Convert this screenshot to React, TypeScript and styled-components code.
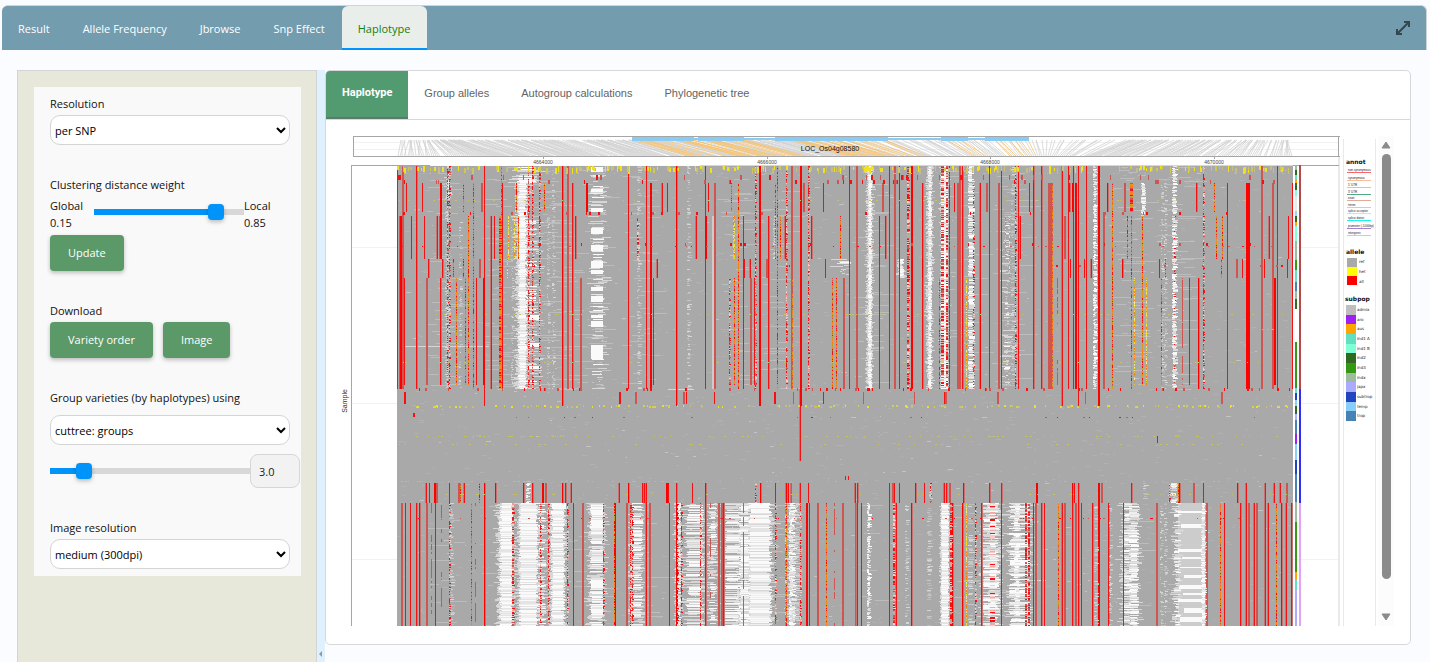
import React, { useMemo, useState } from 'react';
import styled, { createGlobalStyle } from 'styled-components';

const uiFont = '"Open Sans", "Noto Sans", sans-serif';
const plainFont = '"Liberation Sans", Arial, sans-serif';

const GlobalStyle = createGlobalStyle`
  * { box-sizing: border-box; }
  body {
    margin: 0;
    background: #fafcff;
    color: #111;
    font: 11px/16px ${uiFont};
  }
`;

/* ---------- page shell ---------- */

const Page = styled.div`
  display: flex;
  flex-direction: column;
  min-height: 100vh;
  padding: 5px 3px 0 2px;
`;

const TopBar = styled.nav`
  display: flex;
  height: 45px;
  background: #739cae;
  border-top: 1px solid #cfd4d6;
  border-right: 1px solid #cfd4d6;
  border-radius: 6px 6px 0 0;
`;

const TopTab = styled.button<{ $active?: boolean }>`
  padding: 3px 17px 0 16px;
  border: 0;
  border-bottom: 2px solid ${(p) => (p.$active ? '#0093f9' : 'transparent')};
  border-radius: 6px 6px 0 0;
  background: ${(p) => (p.$active ? '#eaeeea' : 'transparent')};
  color: ${(p) => (p.$active ? '#15800f' : '#fff')};
  font: 11px/16px ${uiFont};
  cursor: pointer;
`;

const ExpandButton = styled.button`
  display: flex;
  align-items: center;
  margin-left: auto;
  padding: 0 16px;
  border: 0;
  background: transparent;
  color: #36464f;
`;

const Workspace = styled.div`
  display: flex;
  flex: 1;
  padding: 20px 16px 0 15px;
`;

/* ---------- sidebar ---------- */

const Sidebar = styled.aside`
  width: 300px;
  flex: none;
  padding: 16px 15px 0 16px;
  background: #e7e8da;
  border: 1px solid #d3d5d5;
  border-bottom: 0;
`;

const Settings = styled.form`
  display: flex;
  flex-direction: column;
  gap: 31px;
  padding: 8px 0 7px 16px;
  background: #f9f9f9;
`;

const Field = styled.div<{ $gap?: number }>`
  display: flex;
  flex-direction: column;
  align-items: flex-start;
  gap: ${(p) => p.$gap ?? 3}px;
`;

const Caption = styled.label`
  line-height: 17px;
`;

const Select = styled.select`
  width: 240px;
  height: 30px;
  padding: 0;
  border: 1px solid #d4d4d4;
  border-radius: 10px;
  background: #fff;
  color: #000;
  font: 11px/16px ${uiFont};
`;

const Row = styled.div<{ $gap?: number; $align?: string }>`
  display: flex;
  align-items: ${(p) => p.$align ?? 'center'};
  gap: ${(p) => p.$gap ?? 0}px;
`;

const SideValue = styled.div<{ $width: number }>`
  width: ${(p) => p.$width}px;
  line-height: 17px;
`;

const Slider = styled.input<{ $width: number; $fill: number; $top?: number }>`
  appearance: none;
  width: ${(p) => p.$width}px;
  height: 16px;
  margin: ${(p) => p.$top ?? 0}px 0 0;
  background: linear-gradient(
      to right,
      #0093f9 ${(p) => p.$fill}%,
      #d8d8d8 ${(p) => p.$fill}%
    )
    center / 100% 6px no-repeat;

  &::-webkit-slider-thumb {
    appearance: none;
    width: 16px;
    height: 16px;
    border-radius: 4px;
    background: #0093f9;
    box-shadow: 0 2px 4px rgba(0, 0, 0, 0.25);
  }
`;

const NumberBox = styled.input`
  width: 50px;
  height: 34px;
  padding: 0 8px;
  border: 1px solid #d6d6d6;
  border-radius: 8px;
  background: #f2f2f2;
  color: #222;
  font: 11px/16px ${uiFont};
`;

const ActionButton = styled.button`
  height: 36px;
  padding: 0 18px;
  border: 0;
  border-radius: 4px;
  background: #5b9969;
  color: #fff;
  box-shadow: 0 2px 4px rgba(0, 0, 0, 0.25);
  font: 11px/16px ${uiFont};
  cursor: pointer;
`;

const Splitter = styled.div`
  display: flex;
  align-items: flex-end;
  width: 8px;
  flex: none;
  padding: 0 3px 5px 2px;
  background: #dff0ff;
`;

/* ---------- result panel ---------- */

const ResultPanel = styled.main`
  flex: 1;
  min-width: 0;
  align-self: flex-start;
  margin-bottom: 17px;
  background: #fff;
  border: 1px solid #d6d8da;
  border-radius: 5px;
  overflow: hidden;
`;

const ResultTabs = styled.nav`
  display: flex;
  height: 49px;
  border-bottom: 1px solid #d6d8da;
`;

const ResultTab = styled.button<{ $active?: boolean }>`
  padding: 0 16px 2px;
  border: 0;
  border-bottom: 2px solid ${(p) => (p.$active ? '#5d7a6c' : 'transparent')};
  background: ${(p) => (p.$active ? '#529b71' : 'transparent')};
  color: ${(p) => (p.$active ? '#fff' : '#636363')};
  font: ${(p) =>
    p.$active ? `bold 11px/16px Roboto, ${plainFont}` : `11px/16px ${plainFont}`};
  cursor: pointer;
`;

const PlotArea = styled.div`
  display: flex;
  align-items: stretch;
  padding: 0 16px 18px 0;
`;

const PlotSvg = styled.svg`
  display: block;
  flex: 1;
  min-width: 0;
  height: auto;
`;

const ScrollRail = styled.div`
  display: flex;
  flex-direction: column;
  align-items: center;
  width: 16px;
  margin-top: 16px;
  background: #fcfcfc;
`;

const ScrollThumb = styled.div`
  flex: 1;
  width: 9px;
  border-radius: 5px;
  background: #8b8b8b;
`;

const ScrollButton = styled.button`
  display: flex;
  justify-content: center;
  align-items: center;
  width: 16px;
  height: 18px;
  padding: 0;
  border: 0;
  background: transparent;
`;

const ScrollGap = styled.div`
  height: 29px;
`;

/* ---------- haplotype plot data ---------- */

/* Named sample rows at which haplotype clusters start or end. */
const ROWS: Record<string, number> = {
  a: 166, b: 183, c: 212, d: 216, e: 242, f: 259, g: 278, h: 385,
  i: 389, j: 406, k: 483, l: 503, m: 626, n: 461,
};

/*
 * Each token is column, first row, last row, style and optional width.
 * Styles: r alt, s strong alt, t pale alt, o alt/het mix, y het mix,
 * p alt/missing mix, q broken alt, w missing, v faint missing.
 * Columns are counted in thirds of a pixel from the block origin.
 */
const COLUMN_BLOCKS: { origin: number; tokens: string }[] = [
  {
    origin: 390,
    tokens:
      '22air 28dit 31dis 36ait 43ghr 49bcr 64dfr 80air 97bcr 103dfr 110ght 116fgr 141dfr 148dft 152bfs 152ghr 158fgr ' +
      '168biv 171aip 178aip 189fgo 199gho 211div 220bco 220fgo 225gho 236dho 249bio 259ghr 269fgt 275bct 283ajr 281ghs ' +
      '303dir 313dfr 328dio3 334aio 337bir 352fgy 355dfy 367div 373dfy 380bco 384dfo 415aip 427aip 448aip 462bco 475div ' +
      '490aiv 517ajs1 532ait 548bir 557dfr 571git 588bcs 715air 742dfp 745aiv2 769air 780bis 790ghr 801fgr 816bcr 832bcr 860ajs1 895aiv2 919dfr',
  },
  {
    origin: 690,
    tokens:
      '18dfr 46air 45dfs 55bcr 66dil2 73bit 118ghp 124bco 133dfy 129dfy 133gho 144bio 160dir 163fgr 180fgr 180ght 195aip 194ghr ' +
      '209ajs 228fgt 236dir 252dfv 257bfo 262aio 270dfo 285dfr 289aip 303ait2 306gio 330ajs 339bct 355aip 365dfr 400bcr 406fgr ' +
      '427gio 439gio 451dfo 459git 478air 498ait 568dir 578bct 587dfr 598air 612ait2 628air 652aip2 664ais 698bir 697fgs 748gio ' +
      '793bcr 801bit2 808ait 818air 828giy 838aiw4 851bip 870bir 869gis 888bct 898air 925bit',
  },
  {
    origin: 990,
    tokens:
      '26bit2 34air 45dfy 58dgy 66aiv2 76aip 85air 90dfr 118bcr 131bcs 131air 155air 174bit5 186bio 202ghq 216ajr 223dft 235air ' +
      '239bcr 246bcs 241fgr 250air 256bis 265ajr 283fgr 289air 303fgr 312aiw2 324ajs 339cit2 352bcs1 367bio 397fgs1 404bct 413dfo ' +
      '420bco3 424dio 433ghy 457bdw3 458dho 470ghy 508fgr 515gho 517biv 526fgo 527biv 550aiw3 552dip 577ghq 598ghr 620bcr 625gis1 ' +
      '640aip 673bco 679dfo 698dfo 694fgo 712bir 739fgt 757fgr 768bis2 774bis2 815ait2 823fgr 837dfr 846bit 852ghs2 862air 892fgr 895dfr 907bir',
  },
  {
    origin: 320,
    tokens:
      '318klr 328klr 343kls 350klt 388klr 415klt 420klo 432klr 477klo 493kls1 527kls1 611kls1 623klw2 638klr 666kls 675klt 727kls1 737klr 753klr ' +
      '897klr 925kls1 967klr 972klr 978klr 1040kls 1045klr 1070klr 1117klr 1157kls1 1307klp 1320kls1 1366klr 1398kls 1404klr 1412klt ' +
      '245lmt 256lmr 271lmr 290lmr 298lms1 318lmt 334lmq 346lmr 365lmq 388lmp 394lmv2 455lmo 466lmq 493lms1 578lmp2 660lmp 685lmp 742lmp 760lmr ' +
      '786lmt 850lmp 884lms 884lmo 920lmt2 930lmp 938lmp 978lmr 987lmt 1048lmr 1068lms 1072lmp 1083lmp 1140lmp 1157lmr 1170lmq 1195lmt ' +
      '1205lmt 1211lmr 1270lmq 1366lmp 1398lmr 1398lmo 1412lmw 1430lmv2',
  },
  {
    origin: 780,
    tokens:
      '18klr 25klr 33klr 60inr 60klr 85klr 225klr 233klr 328klr 338klt2 343klr 358klr 406kls1 433klr 452klv 452klp 492klr 500klr 509klt 549kls1 ' +
      '629klr 665klr 769kls 876kls 882klr 896klr 955kls 963klt 1055klr 1092klv3 1168klp 1195klo 1197kls1 1239klt 1270klr 1372kls1 1398klr 1455klr 1482klr 1500klr 1520klt ' +
      '15lmp 32lmw2 50lmv4 60lmp 80lms 88lmr 113lmt 139lmo 163lmq 186lmt 226lmt 231lmr 244lmr 266lmw2 328lmr 340lmp2 348lmr 378lmv2 394lms1 ' +
      '445lmv3 511lmp2 517lms1 548lms1 559lmy 568lmv4 585lmp 605lmr 664lmr 760lmr 766lmt 785lmr 793lmr 836lmo 846lmr 852lmt 878lmr 885lmt ' +
      '896lmr 904lmr 938lmr 945lmv2 955lms 986lmr 992lmv 1030lmr 1128lmt 1145lmv 1157lmv 1268lmw3 1280lmt2 1320lmo 1333lmr 1382lmr 1398lmr ' +
      '1405lmt 1422lmr 1428lmt2 1455lmr 1464lmr 1488lmo 1503lms1 1518lmr 1535lmr',
  },
];

/* Missing-data bands: x, width, first y, last y, coverage, raggedness. */
const MISSING_BANDS: number[][] = [
  [519, 7, 183, 389, 1, 5], [526, 11, 216, 389, 0.1, 3], [520, 14, 166, 183, 0.4, 10],
  [592, 11, 166, 389, 0.14, 5], [868, 4, 166, 389, 0.95, 3], [928, 4, 166, 389, 0.85, 3],
  [942, 5, 166, 389, 0.9, 3], [899, 5, 259, 278, 0.8, 3],
  [840, 8, 259, 278, 0.15, 8], [447, 3, 174, 200, 0.5, 3], [1005, 4, 216, 389, 0.12, 5],
  [1171, 6, 483, 503, 0.4, 3],
  [501, 11, 503, 626, 0.95, 6], [520, 17, 503, 626, 0.97, 4], [538, 7, 503, 626, 0.3, 4],
  [552, 12, 503, 626, 0.9, 5], [591, 12, 503, 626, 0.6, 5], [632, 10, 503, 626, 0.45, 5],
  [676, 5, 503, 626, 0.6, 3], [688, 14, 503, 626, 0.4, 6], [710, 6, 503, 626, 0.35, 5],
  [726, 13, 503, 626, 0.5, 6], [740, 9, 503, 626, 0.7, 5], [750, 20, 503, 626, 0.93, 6],
  [790, 6, 503, 626, 0.5, 5], [941, 8, 503, 626, 1, 2], [983, 16, 503, 626, 0.35, 5],
  [990, 6, 503, 626, 0.7, 6], [1010, 20, 503, 626, 0.35, 5], [1015, 4, 503, 626, 0.7, 4],
  [1124, 6, 503, 626, 0.4, 6], [1130, 8, 503, 626, 0.65, 4], [1175, 5, 503, 626, 0.4, 4],
  [1202, 3, 503, 626, 1, 1],
];

/* Solid missing blocks: x, y, width, height. */
const MISSING_BLOCKS: number[][] = [
  [591, 167, 12, 5], [591, 189, 12, 3], [591, 208, 12, 4], [591, 228, 12, 6], [591, 246, 12, 5],
  [591, 261, 12, 7], [591, 270, 12, 4], [591, 287, 12, 4], [591, 296, 12, 6], [591, 315, 12, 3],
  [591, 321, 12, 6], [591, 345, 12, 14], [528, 315, 11, 5], [528, 343, 11, 4], [529, 366, 10, 3],
  [591, 505, 12, 8], [591, 520, 12, 4], [591, 560, 12, 3], [591, 579, 12, 9], [591, 606, 12, 7],
  [1178, 511, 25, 2], [1181, 524, 22, 4], [1178, 549, 25, 3], [1182, 557, 21, 2], [1180, 567, 23, 1],
  [1184, 575, 19, 3], [1179, 585, 24, 4], [1183, 593, 20, 2], [1178, 599, 25, 3], [1184, 608, 19, 5],
  [1180, 617, 23, 5], [552, 503, 14, 6], [1010, 560, 20, 4], [1010, 590, 20, 3], [983, 605, 14, 4],
];

const RED = '#f51111';
const STRONG = '#ff0000';
const PALE = '#cf5551';
const EDGE = '#c9716e';
const ORANGE = '#ff7a10';
const YELLOW = '#f0e020';
const MISSING = '#fafafa';
const HAZE = '#d6d6d6';
const FAINT = '#bcbcbc';

function makeRandom(seed: number) {
  let s = seed;
  return () => {
    s = (s + 0x6d2b79f5) | 0;
    let t = Math.imul(s ^ (s >>> 15), 1 | s);
    t = (t + Math.imul(t ^ (t >>> 7), 61 | t)) ^ t;
    return ((t ^ (t >>> 14)) >>> 0) / 4294967296;
  };
}

interface Layer {
  fill: string;
  d: string;
}

function buildHeatmap(): Layer[] {
  const rnd = makeRandom(8580);
  const layers: { fill: string; parts: string[] }[] = [];
  let stage: Record<string, string[]> = {};

  const rect = (fill: string, x: number, y: number, w: number, h: number) => {
    const left = Math.max(397, Math.round(x));
    const right = Math.min(1293, Math.round(x + w));
    if (right <= left) return;
    if (!stage[fill]) {
      stage[fill] = [];
      layers.push({ fill, parts: stage[fill] });
    }
    stage[fill].push(`M${left} ${y}h${right - left}v${h}h${left - right}z`);
  };
  const nextStage = () => {
    stage = {};
  };
  const pick = (...items: string[]) => items[Math.floor(rnd() * items.length)];
  const int = (lo: number, hi: number) => lo + Math.floor(rnd() * (hi - lo));

  // background speckle and short streaks
  for (let n = 0; n < 2200; n++) {
    rect(rnd() < 0.12 ? '#c4c4c4' : '#b1b1b1', int(397, 1290), int(166, 626), int(1, 6), 1);
  }
  for (let n = 0; n < 620; n++) {
    const x = pick('445', '500', '540', '560', '590', '640', '735', '775', '870', '960', '1010', '1130', '1175');
    rect(FAINT, +x + int(-18, 10), rnd() < 0.8 ? int(166, 390) : int(503, 626), int(5, 26), 1);
  }
  rect(MISSING, 430, 165, 270, 1);
  rect(HAZE, 700, 165, 593, 1);
  rect(HAZE, 405, 346, 84, 1);
  rect(HAZE, 668, 389, 26, 1);
  rect('#cccccc', 1178, 503, 26, 123);

  nextStage();
  for (const [x, w, y0, y1, cover, rag] of MISSING_BANDS) {
    for (let y = y0; y < y1; y++) {
      if (rnd() > cover) {
        if (rnd() < 0.4) rect(pick(HAZE, '#c2c2c2'), x + int(0, w), y, int(1, w), 1);
        continue;
      }
      const l = Math.floor(rnd() * rnd() * rag);
      const r = Math.floor(rnd() * rnd() * rag);
      rect(HAZE, x - l - int(0, rag), y, w + l + r + int(0, rag), 1);
    }
  }
  nextStage();
  for (const [x, w, y0, y1, cover, rag] of MISSING_BANDS) {
    for (let y = y0; y < y1; y++) {
      if (rnd() > cover) continue;
      const l = int(-1, Math.max(1, rag >> 1));
      rect(pick(MISSING, MISSING, '#eeeeee', '#e4e4e4'), x - l, y, w + l + int(-1, Math.max(1, rag >> 1)), 1);
    }
  }
  for (const [x, y, w, h] of MISSING_BLOCKS) rect(MISSING, x, y, w, h);

  nextStage();
  for (const { origin, tokens } of COLUMN_BLOCKS) {
    for (const token of tokens.split(' ')) {
      const m = /^(\d+)([a-z])([a-z])([a-z])(\d?)$/.exec(token);
      if (!m) continue;
      const x = origin + Math.floor(+m[1] / 3);
      const y0 = ROWS[m[2]];
      const y1 = ROWS[m[3]];
      const style = m[4];
      const w = m[5] ? +m[5] : style === 's' ? 2 : 1;
      if (style === 'r') {
        rect(RED, x, y0, 1, y1 - y0);
        if (+m[1] % 3 === 2) rect(EDGE, x + 1, y0, 1, y1 - y0);
        if (+m[1] % 3 === 0) rect(EDGE, x - 1, y0, 1, y1 - y0);
      } else if (style === 's') {
        rect(STRONG, x, y0, w, y1 - y0);
        if (w === 1) rect(EDGE, x + 1, y0, 1, y1 - y0);
      } else if (style === 't') {
        rect(PALE, x, y0, m[5] ? w : 2, y1 - y0);
      } else if (style === 'l') {
        rect('#cccccc', x, y0, w, y1 - y0);
      } else {
        let on = true;
        for (let y = y0; y < y1; y++) {
          if (style === 'o') {
            rect(pick(RED, RED, PALE, ORANGE, ORANGE, '#c9a13a', '#e8921c'), x, y, w, 1);
          } else if (style === 'y') {
            rect(pick(YELLOW, '#e3c84a', ORANGE, '#eee6b0', '#b5a878'), x, y, w, 1);
          } else if (style === 'p') {
            if (rnd() < 0.85) rect(pick(RED, RED, PALE, '#f7c9c7', '#e8a09c'), x, y, w + (rnd() < 0.3 ? 1 : 0), 1);
          } else if (style === 'q') {
            if (rnd() < 0.1) on = !on;
            if (on) rect(PALE, x, y, w, 1);
          } else if (style === 'w') {
            if (rnd() < 0.8) rect(pick(MISSING, '#eaeaea', '#dadada'), x - int(0, 2), y, w + int(0, 3), 1);
          } else if (rnd() < 0.4) {
            rect(pick(HAZE, '#c6c6c6', '#bcbcbc'), x - int(0, 2), y, w + int(0, 3), 1);
          }
        }
      }
    }
  }

  // wide alt/missing mixture column
  for (let y = 166; y < 389; y++) {
    rect(pick(RED, MISSING, PALE, '#f0b4b0'), 941, y, 3, 1);
    rect(pick(RED, '#f0b4b0', MISSING, PALE), 946, y, 2, 1);
    rect(rnd() < 0.8 ? RED : PALE, 949, y, 1, 1);
  }
  for (let y = 503; y < 626; y++) {
    if (rnd() < 0.35) rect(pick('#f3aaa6', '#f7c9c7', RED), 990, y, 5, 1);
    if (rnd() < 0.7) rect(pick(RED, PALE), 1025, y, 2, 1);
    if (rnd() < 0.7) rect(pick(RED, PALE), 1028, y, 2, 1);
  }

  nextStage();
  // admixed samples on top, het-rich rows further down
  for (let n = 0; n < 230; n++) {
    rect(pick(YELLOW, YELLOW, '#cfc65a', '#c4be80'), int(397, 1290), int(166, 169), int(1, 3), int(3, 7));
  }
  for (let n = 0; n < 160; n++) {
    rect(pick(YELLOW, '#d8cf4a', '#c8c070'), int(397, 1290), int(405, 407), int(1, 3), 2);
  }
  for (const y of [173, 200, 314, 329, 362, 436, 444, 481, 494]) {
    const count = y === 481 || y === 436 ? 90 : 40;
    for (let n = 0; n < count; n++) rect('#c8c25c', int(397, 1290), y, int(1, 3), 1);
  }
  // isolated alt calls at cluster borders
  for (const [y, h, count] of [[175, 5, 30], [180, 4, 30], [212, 3, 26], [243, 3, 20], [246, 1, 30], [265, 2, 12], [388, 3, 60], [392, 12, 16], [518, 1, 40], [417, 1, 20]]) {
    for (let n = 0; n < count; n++) rect(pick(RED, PALE), int(397, 1290), y, int(1, 3), h);
  }
  rect(RED, 413, 413, 2, 4);
  rect(RED, 1157, 436, 1, 7);
  rect(RED, 845, 476, 1, 4);
  rect(RED, 848, 476, 1, 4);

  return layers.map(({ fill, parts }) => ({ fill, d: parts.join('') }));
}

/* Connector from a genomic position (top) to its SNP column (bottom). */
function topOf(bottom: number): number {
  const stops = [
    [397, 401], [430, 425], [500, 455], [640, 595], [720, 660], [860, 800],
    [950, 920], [1025, 1012], [1040, 1034], [1052, 1060], [1090, 1130], [1200, 1225], [1293, 1290],
  ];
  for (let n = 1; n < stops.length; n++) {
    const [b1, t1] = stops[n];
    const [b0, t0] = stops[n - 1];
    if (bottom <= b1) return t0 + ((bottom - b0) / (b1 - b0)) * (t1 - t0);
  }
  return bottom;
}

const EXONS: number[][] = [[632, 694], [698, 744], [775, 888], [941, 968], [985, 1029]];

function buildConnectors() {
  const rnd = makeRandom(77);
  const grey: string[] = [];
  const coding: string[] = [];
  for (let b = 398; b < 1293; b += 2) {
    const t = Math.round(topOf(b) + (rnd() - 0.5) * 8);
    const line = `M${t} 140L${b} 156`;
    const inExon = EXONS.some(([x0, x1]) => t >= x0 && t <= x1);
    if (inExon && rnd() < 0.45) coding.push(line);
    else if (rnd() < 0.9) grey.push(line);
  }
  return { grey: grey.join(''), coding: coding.join('') };
}

const ANNOTATIONS: [string, string, number][] = [
  ['non synonymous', '#ff6464', 172], ['synonymous', '#f8bd94', 180], ["5' UTR", '#bfc0fb', 187],
  ["3' UTR", '#54aa86', 194], ['exon', '#e2ab95', 200], ['intron', '#cccccc', 207],
  ['splice acceptor', '#dbe79a', 213], ['splice donor', '#1ff2f2', 220],
  ['promoter (-1000bp)', '#a77bd6', 228], ['intergenic', '#cccccc', 235],
];
const ALLELES: [string, string][] = [['ref', '#a9a9a9'], ['het', '#ffff00'], ['alt', '#ff0000']];
const SUBPOPS: [string, string][] = [
  ['admix', '#bebebe'], ['aro', '#a020f0'], ['aus', '#ffa500'], ['ind1 A', '#62dfc0'],
  ['ind1 B', '#7fffd4'], ['ind2', '#2f6a20'], ['ind3', '#339914'], ['indx', '#9dbc9d'],
  ['japx', '#aaaaff'], ['subtrop', '#2144c0'], ['temp', '#87cefa'], ['trop', '#4682b4'],
];
/* Subpopulation strip: colour and height, from the first sample down. */
const STRIP: [string, number][] = [
  ['#9dbc9d', 5], ['#2f6a20', 5], ['#62dfc0', 4], ['#ffa500', 4], ['#2f6a20', 7], ['#7fffd4', 6],
  ['#dfeee8', 15], ['#9ed3f5', 5], ['#2f6a20', 6], ['#ffa500', 4], ['#7fffd4', 15], ['#9dbc9d', 19],
  ['#339914', 10], ['#62dfc0', 12], ['#4682b4', 9], ['#9dbc9d', 8], ['#2f6a20', 10], ['#ffffff', 33],
  ['#339914', 46], ['#62dfc0', 5], ['#2144c0', 7], ['#87cefa', 6], ['#2f6a20', 8], ['#aaaaff', 6],
  ['#4682b4', 14], ['#a020f0', 10], ['#87cefa', 16], ['#2144c0', 14], ['#4682b4', 28], ['#9dbc9d', 20],
  ['#339914', 50], ['#ffa500', 8], ['#62dfc0', 9], ['#aaaaff', 37],
];

function HaplotypePlot() {
  const heatmap = useMemo(buildHeatmap, []);
  const connectors = useMemo(buildConnectors, []);
  let stripY = 165;
  const strip = STRIP.map(([fill, h]) => {
    const y = stripY;
    stripY += h;
    return { fill, y, h: Math.min(h, 626 - y) };
  }).filter((s) => s.h > 0);

  return (
    <PlotSvg viewBox="326 120 1052 506" role="img" aria-label="Haplotype heat map">
      {/* grid and frame */}
      <g shapeRendering="crispEdges">
        <path d="M354 142h985v1h-985zM354 149h985v1h-985z" fill="#f2f2f2" />
        <path d="M352 247h987v1h-987zM352 403h987v1h-987zM352 559h987v1h-987z" fill="#f2f2f2" />
        <path d="M1338 157h2v469h-2zM1343 139h1v487h-1zM1375 139h1v487h-1z" fill="#e9e9e9" />
      </g>

      {/* gene model */}
      <path d={connectors.grey} stroke="#d0d0d0" strokeOpacity="0.75" fill="none" />
      <path d={connectors.coding} stroke="#f5c270" strokeOpacity="0.8" fill="none" />
      <g fill="#8acbf3" shapeRendering="crispEdges">
        {EXONS.map(([x0, x1]) => (
          <rect key={x0} x={x0} y={136} width={x1 - x0} height={5} />
        ))}
        <rect x={632} y={138} width={397} height={2} />
      </g>
      <g fill="#a6a6a6" shapeRendering="crispEdges">
        <path d="M353 136h987v1h-987zM353 156h987v1h-987zM353 136h1v21h-1zM1338 136h1v21h-1z" />
        <path d="M352 165h987v1h-987zM351 165h1v461h-1z" />
        <path d="M543 157h1v2h-1zM767 157h1v2h-1zM990 157h1v2h-1zM1214 157h1v2h-1z" />
      </g>
      <g fontFamily={plainFont} fill="#333" textAnchor="middle">
        <text x="830" y="151" fontSize="7" fill="#111">LOC_Os04g08580</text>
        <g fontSize="5" fill="#444">
          <text x="543" y="164">4664000</text>
          <text x="767" y="164">4666000</text>
          <text x="990" y="164">4668000</text>
          <text x="1214" y="164">4670000</text>
        </g>
        <text transform="translate(347 401) rotate(-90)" fontSize="7">Sample</text>
      </g>

      {/* genotype matrix */}
      <g shapeRendering="crispEdges">
        <rect x="397" y="166" width="896" height="460" fill="#a9a9a9" />
        {heatmap.map((layer, n) => (
          <path key={n} d={layer.d} fill={layer.fill} />
        ))}
        {strip.map((s) => (
          <rect key={s.y} x={1295} y={s.y} width={2} height={s.h} fill={s.fill} />
        ))}
        <rect x="1299" y="165" width="2" height="224" fill="#b34a4a" />
        <rect x="1299" y="389" width="2" height="114" fill="#2f2ff2" />
        <rect x="1299" y="503" width="2" height="123" fill="#e2a4f2" />
      </g>

      {/* legends */}
      <g fontFamily='"DejaVu Sans", sans-serif' fill="#222">
        <g fontSize="6" fontWeight="bold" fill="#111">
          <text x="1346" y="164">annot</text>
          <text x="1346" y="254">allele</text>
          <text x="1345" y="301">subpop</text>
        </g>
        {ANNOTATIONS.map(([name, color, y]) => (
          <g key={name}>
            <text x="1348" y={y - 1} fontSize="3" fontFamily={plainFont}>{name}</text>
            <rect x="1347" y={y} width="24" height="1" fill={color} shapeRendering="crispEdges" />
          </g>
        ))}
        {ALLELES.map(([name, color], n) => (
          <g key={name}>
            <rect x="1347" y={258 + n * 9} width="10" height="9" fill={color} shapeRendering="crispEdges" />
            <text x="1359" y={263 + n * 10} fontSize="4">{name}</text>
          </g>
        ))}
        {SUBPOPS.map(([name, color], n) => {
          const y = 305 + Math.round((n * 29) / 3);
          return (
            <g key={name}>
              <rect x="1346" y={y} width="10" height={10} fill={color} shapeRendering="crispEdges" />
              <text x="1357" y={y + 6} fontSize="4">{name}</text>
            </g>
          );
        })}
      </g>
    </PlotSvg>
  );
}

/* ---------- app ---------- */

const TOP_TABS = ['Result', 'Allele Frequency', 'Jbrowse', 'Snp Effect', 'Haplotype'];
const RESULT_TABS = ['Haplotype', 'Group alleles', 'Autogroup calculations', 'Phylogenetic tree'];

export default function App() {
  const [weight, setWeight] = useState(85);
  const [groups, setGroups] = useState(3);

  return (
    <>
      <GlobalStyle />
      <Page>
        <TopBar>
          {TOP_TABS.map((name) => (
            <TopTab key={name} type="button" $active={name === 'Haplotype'}>
              {name}
            </TopTab>
          ))}
          <ExpandButton type="button" aria-label="Expand">
            <svg width="14" height="14" viewBox="0 0 14 14" fill="none" stroke="currentColor" strokeWidth="2">
              <path d="M8 1h5v5M13 1L1 13M1 8v5h5" />
            </svg>
          </ExpandButton>
        </TopBar>

        <Workspace>
          <Sidebar>
            <Settings onSubmit={(e) => e.preventDefault()}>
              <Field>
                <Caption htmlFor="resolution">Resolution</Caption>
                <Select id="resolution">
                  <option>per SNP</option>
                </Select>
              </Field>

              <Field $gap={4}>
                <Caption htmlFor="weight">Clustering distance weight</Caption>
                <Row $align="flex-start">
                  <SideValue $width={44}>
                    Global
                    <br />
                    {((100 - weight) / 100).toFixed(2)}
                  </SideValue>
                  <Slider
                    id="weight"
                    type="range"
                    min={0}
                    max={100}
                    value={weight}
                    $width={150}
                    $fill={weight}
                    $top={7}
                    onChange={(e) => setWeight(+e.target.value)}
                  />
                  <SideValue $width={40}>
                    Local
                    <br />
                    {(weight / 100).toFixed(2)}
                  </SideValue>
                </Row>
                <ActionButton type="button">Update</ActionButton>
              </Field>

              <Field>
                <Caption as="div">Download</Caption>
                <Row $gap={10}>
                  <ActionButton type="button">Variety order</ActionButton>
                  <ActionButton type="button">Image</ActionButton>
                </Row>
              </Field>

              <Field $gap={9}>
                <Caption htmlFor="grouping">Group varieties (by haplotypes) using</Caption>
                <Select id="grouping">
                  <option>cuttree: groups</option>
                </Select>
                <Row>
                  <Slider
                    type="range"
                    aria-label="Number of groups"
                    min={1}
                    max={15}
                    value={groups}
                    $width={200}
                    $fill={((groups - 1) / 14) * 100}
                    onChange={(e) => setGroups(+e.target.value)}
                  />
                  <NumberBox aria-label="Groups" readOnly value={groups.toFixed(1)} />
                </Row>
              </Field>

              <Field>
                <Caption htmlFor="dpi">Image resolution</Caption>
                <Select id="dpi">
                  <option>medium (300dpi)</option>
                </Select>
              </Field>
            </Settings>
          </Sidebar>

          <Splitter>
            <svg width="3" height="6" viewBox="0 0 3 6">
              <path d="M3 0v6L0 3z" fill="#8c9aa6" />
            </svg>
          </Splitter>

          <ResultPanel>
            <ResultTabs>
              {RESULT_TABS.map((name, n) => (
                <ResultTab key={name} type="button" $active={n === 0}>
                  {name}
                </ResultTab>
              ))}
            </ResultTabs>
            <PlotArea>
              <HaplotypePlot />
              <ScrollRail>
                <ScrollButton type="button" aria-label="Scroll up">
                  <svg width="10" height="8" viewBox="0 0 10 8">
                    <path d="M5 1L9 7H1z" fill="#8b8b8b" stroke="#8b8b8b" strokeLinejoin="round" />
                  </svg>
                </ScrollButton>
                <ScrollThumb />
                <ScrollGap />
                <ScrollButton type="button" aria-label="Scroll down">
                  <svg width="10" height="8" viewBox="0 0 10 8">
                    <path d="M5 7L1 1h8z" fill="#8b8b8b" stroke="#8b8b8b" strokeLinejoin="round" />
                  </svg>
                </ScrollButton>
              </ScrollRail>
            </PlotArea>
          </ResultPanel>
        </Workspace>
      </Page>
    </>
  );
}
